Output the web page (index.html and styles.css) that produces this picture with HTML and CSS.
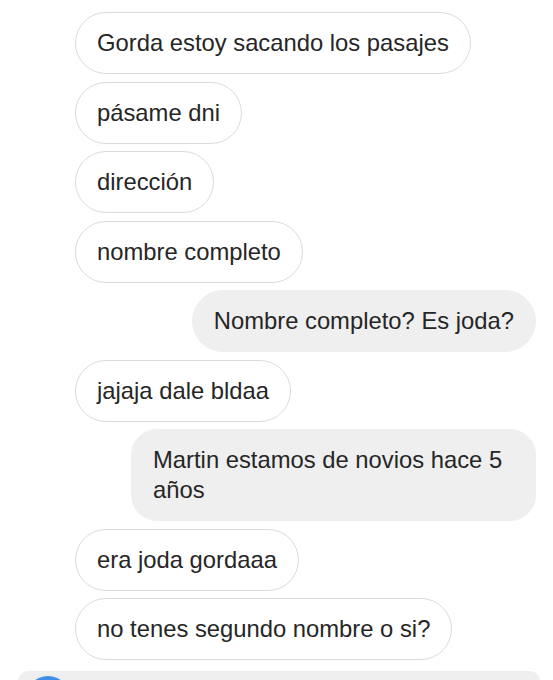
FILE: index.html
```html
<!DOCTYPE html>
<html lang="es">
<head>
<meta charset="utf-8">
<link rel="stylesheet" href="styles.css">
</head>
<body>
<div class="chat">
  <div class="msg in">Gorda estoy sacando los pasajes</div>
  <div class="msg in">pásame dni</div>
  <div class="msg in">dirección</div>
  <div class="msg in">nombre completo</div>
  <div class="msg out">Nombre completo? Es joda?</div>
  <div class="msg in">jajaja dale bldaa</div>
  <div class="msg out wide">Martin estamos de novios hace 5 años</div>
  <div class="msg in">era joda gordaaa</div>
  <div class="msg in">no tenes segundo nombre o si?</div>
</div>
<div class="composer">
  <div class="camera"></div>
</div>
</body>
</html>
```
FILE: styles.css
```css
html, body {
  margin: 0;
  padding: 0;
  background: #ffffff;
  width: 553px;
  height: 680px;
  overflow: hidden;
}
body {
  font-family: "Liberation Sans", Arial, sans-serif;
  color: #262626;
}
.chat {
  display: flex;
  flex-direction: column;
  gap: 7.5px;
  padding-top: 12px;
}
.msg {
  font-size: 23.8px;
  line-height: 30px;
  padding: 15px 21px;
  border-radius: 31px;
  box-sizing: border-box;
}
.in {
  align-self: flex-start;
  margin-left: 75px;
  border: 1px solid #dbdbdb;
  background: #fff;
}
.out {
  align-self: flex-end;
  margin-right: 17px;
  background: #efefef;
  border: 1px solid #efefef;
}
.wide {
  width: 405px;
  border-radius: 26px;
}
.composer {
  margin: 11px 13px 0 18px;
  height: 10px;
  border-radius: 28px 28px 0 0;
  background: #efefef;
  padding: 5px 8px 0;
  box-sizing: border-box;
  overflow: hidden;
}
.camera {
  width: 44px;
  height: 44px;
  border-radius: 50%;
  background: #3e8ee8;
}
```
